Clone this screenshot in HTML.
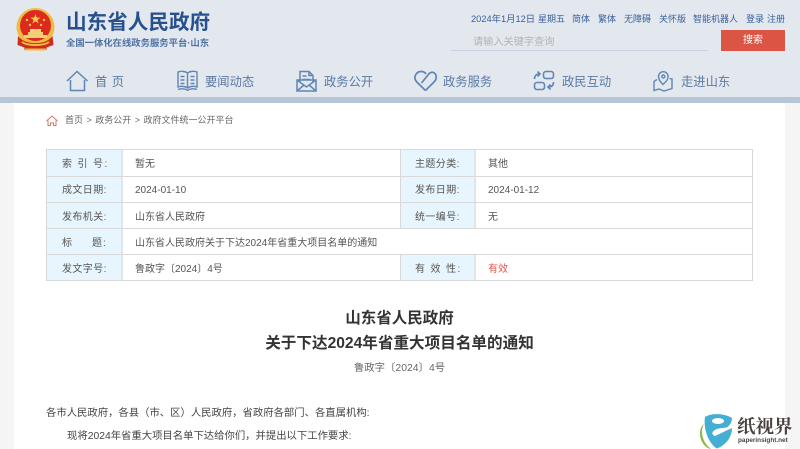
<!DOCTYPE html>
<html lang="zh"><head><meta charset="utf-8"><style>
html,body{margin:0;padding:0}
body{width:800px;height:449px;position:relative;overflow:hidden;background:#f5f5f5;font-family:"Liberation Sans","Noto Sans CJK SC",sans-serif;font-size:10px;color:#444}
div,span,svg{position:absolute;white-space:nowrap}
.n{color:#5a7aa3;font-size:12.3px;line-height:18px;top:73px}
.t{top:12px;font-size:9px;color:#39609b;line-height:14px}
.b{background:#e7f6fe}
.l{color:#555;line-height:24px}
.l span{position:static;letter-spacing:0}
.v{line-height:24px;color:#555}
.ln{background:#d9d9d9}
.lg{background:#e0e5ea}
</style></head><body>
<div style="left:0;top:0;width:800px;height:97px;background:#e3e7ee"></div>
<div style="left:0;top:97px;width:800px;height:6px;background:#b6c6d8"></div>
<div style="left:14px;top:103px;width:771px;height:346px;background:#fff"></div>

<svg style="left:15px;top:8px" width="42" height="44" viewBox="0 0 42 44">
<circle cx="20.500" cy="19" r="19" fill="#eebc3e"/><circle cx="20.500" cy="17.500" r="15.500" fill="#dc2a1e"/>
<path d="M20.500 6l1.300 3.600h3.700l-3 2.300 1.100 3.600-3.100-2.200-3.100 2.200 1.100-3.600-3-2.300h3.700z" fill="#f4cc48"/>
<circle cx="12" cy="12" r="1.200" fill="#f4cc48"/><circle cx="29" cy="12" r="1.200" fill="#f4cc48"/><circle cx="15" cy="17" r="1.200" fill="#f4cc48"/><circle cx="26" cy="17" r="1.200" fill="#f4cc48"/>
<path d="M9 30v-3h4v-3h2v-3h11v3h2v3h4v3z" fill="#f2cf76"/>
<path d="M3 28c5 6 11 7 17.500 7s12-1 17-7l1 9-7 2.500v2.500h-22v-2.500l-7-2.500z" fill="#d22a1c"/>
<path d="M7 34c5 4 22 4 27 0M10 41.500h21" stroke="#eebc3e" stroke-width="2" fill="none"/>
</svg>

<div style="left:66px;top:11px;font-size:20.600px;line-height:24px;font-weight:bold;color:#27508f;">山东省人民政府</div>
<div style="left:66px;top:37px;font-size:9.330px;line-height:13px;font-weight:bold;color:#4f72a3">全国一体化在线政务服务平台·山东</div>

<div class="t" style="left:471px;font-size:9.300px">2024年1月12日</div>
<div class="t" style="left:538px">星期五</div>
<div class="t" style="left:572px">简体</div>
<div class="t" style="left:598px">繁体</div>
<div class="t" style="left:624px">无障碍</div>
<div class="t" style="left:659px">关怀版</div>
<div class="t" style="left:693px">智能机器人</div>
<div class="t" style="left:746px">登录</div>
<div class="t" style="left:767px">注册</div>

<div style="left:473px;top:35px;font-size:10.200px;color:#b4b4b4;line-height:16px">请输入关键字查询</div>
<div style="left:451px;top:50px;width:257px;height:1px;background:#c8d2e2"></div>
<div style="left:721px;top:30px;width:64px;height:21px;background:#dc5444;color:#fff;text-align:center;line-height:22px">搜索</div>

<svg style="left:66px;top:70px" width="23" height="22" viewBox="0 0 23 22" fill="none" stroke="#5f86b4" stroke-width="1.500"><path d="M1 11L11 1.500 21.500 11"/><path d="M4.500 10v10.500h14V10"/></svg>
<div class="n" style="left:95px;letter-spacing:4.500px">首页</div>

<svg style="left:177px;top:70px" width="21" height="21" viewBox="0 0 21 21" fill="none" stroke="#5f86b4" stroke-width="1.400"><path d="M1 2c3-1 7-1 9.500 1 2.500-2 6.500-2 9.500-1v15c-3-1-7-1-9.500 1-2.500-2-6.500-2-9.500-1z"/><path d="M10.500 3v15M3.500 6.500h4M3.500 10h4M3.500 13.500h4M13.500 6.500h4M13.500 10h4M13.500 13.500h4M1 19.500c3-1 7-1 9.500.8 2.500-1.800 6.500-1.800 9.500-.8"/></svg>
<div class="n" style="left:205px">要闻动态</div>

<svg style="left:296px;top:70px" width="21" height="22" viewBox="0 0 21 22" fill="none" stroke="#5f86b4" stroke-width="1.500"><path d="M1 10v11h19V10z"/><path d="M4 12V1.500h9l4 4V12M13 1.500v4h4M6.500 6h4M6.500 9.500h8"/><path d="M1 10l9.500 7 9.500-7M1 21l7-6M20 21l-7-6"/></svg>
<div class="n" style="left:324px">政务公开</div>

<svg style="left:414px;top:70px" width="23" height="22" viewBox="0 0 23 22" fill="none" stroke="#5f86b4" stroke-width="1.700"><path d="M11.500 20.500L2.800 12C-1.500 7 2.500 1.200 7.500 1.500c2 .1 3.500 1 4.500 2.500"/><path d="M7.500 13L14 5c3-4.500 8-3 8.200 2 .1 2.200-.9 3.800-2.200 5l-8.500 8.500"/></svg>
<div class="n" style="left:443px">政务服务</div>

<svg style="left:533px;top:70px" width="22" height="21" viewBox="0 0 22 21" fill="none" stroke="#5f86b4" stroke-width="1.600"><rect x="10.500" y="1.500" width="10" height="7" rx="2.500"/><rect x="1.500" y="12.500" width="10" height="7" rx="2.500"/><path d="M1.500 9c0-3 1.500-5 5-5M4.500 1.500L7 4 4.500 6.500M20.500 12c0 3-1.500 5-5 5M17.500 14.500L15 17l2.500 2.500"/></svg>
<div class="n" style="left:562px">政民互动</div>

<svg style="left:653px;top:70px" width="20" height="22" viewBox="0 0 20 22" fill="none" stroke="#5f86b4" stroke-width="1.400"><path d="M10 14.500C7 11.500 5.500 9.500 5.500 6.500a4.800 4.800 0 0 1 9.600 0c0 3-2 5-5.100 8z"/><circle cx="10.300" cy="6.500" r="1.500"/><path d="M4 9.500L1 11.500v9l5-1.500 5 2 8-2.500V9l-2.500-.5"/></svg>
<div class="n" style="left:681px">走进山东</div>

<svg style="left:46px;top:115px" width="12" height="11" viewBox="0 0 12 11" fill="none" stroke="#d9776a" stroke-width="1"><path d="M.5 6L6 1l5.500 5M2 5.500v5h2.500V8h3v2.500H10v-5"/></svg>
<div style="left:65px;top:112px;line-height:16px;color:#666;font-size:9px;word-spacing:1px">首页 &gt; 政务公开 &gt; 政府文件统一公开平台</div>

<div style="left:46px;top:149px;width:707px;height:132px;box-sizing:border-box;border:1px solid #d9d9d9;background:#fff"></div>
<div class="b" style="left:47px;top:150px;width:74px;height:130px"></div>
<div class="b" style="left:401px;top:150px;width:74px;height:78px"></div>
<div class="b" style="left:401px;top:255px;width:74px;height:25px"></div>
<div class="lg" style="left:121px;top:150px;width:2px;height:130px"></div>
<div class="ln" style="left:400px;top:150px;width:1px;height:78px"></div>
<div class="lg" style="left:474px;top:150px;width:2px;height:78px"></div>
<div class="ln" style="left:400px;top:255px;width:1px;height:25px"></div>
<div class="lg" style="left:474px;top:255px;width:2px;height:25px"></div>
<div class="ln" style="left:46px;top:176px;width:707px;height:1px"></div>
<div class="ln" style="left:46px;top:202px;width:707px;height:1px"></div>
<div class="ln" style="left:46px;top:228px;width:707px;height:1px"></div>
<div class="ln" style="left:46px;top:254px;width:707px;height:1px"></div>

<div class="l" style="left:62px;top:153px;letter-spacing:5.500px">索引号<span style="margin-left:-4px">:</span></div>
<div class="l" style="left:62px;top:179px;letter-spacing:.4px">成文日期:</div>
<div class="l" style="left:62px;top:206px;letter-spacing:.4px">发布机关:</div>
<div class="l" style="left:62px;top:232px;letter-spacing:20px">标题<span style="margin-left:-19px">:</span></div>
<div class="l" style="left:62px;top:258px;letter-spacing:.4px">发文字号:</div>
<div class="l" style="left:415px;top:153px;letter-spacing:.4px">主题分类:</div>
<div class="l" style="left:415px;top:179px;letter-spacing:.4px">发布日期:</div>
<div class="l" style="left:415px;top:206px;letter-spacing:.4px">统一编号:</div>
<div class="l" style="left:415px;top:258px;letter-spacing:5.500px">有效性<span style="margin-left:-4px">:</span></div>

<div class="v" style="left:135px;top:153px">暂无</div>
<div class="v" style="left:135px;top:179px">2024-01-10</div>
<div class="v" style="left:135px;top:206px">山东省人民政府</div>
<div class="v" style="left:135px;top:232px">山东省人民政府关于下达2024年省重大项目名单的通知</div>
<div class="v" style="left:135px;top:258px">鲁政字〔2024〕4号</div>
<div class="v" style="left:488px;top:153px">其他</div>
<div class="v" style="left:488px;top:179px">2024-01-12</div>
<div class="v" style="left:488px;top:206px">无</div>
<div class="v" style="left:488px;top:258px;color:#e4574a">有效</div>

<div style="left:0;width:799px;text-align:center;top:309px;font-size:15.500px;line-height:20px;font-weight:bold;color:#333">山东省人民政府</div>
<div style="left:0;width:799px;text-align:center;top:334px;font-size:15.600px;line-height:20px;font-weight:bold;color:#333">关于下达2024年省重大项目名单的通知</div>
<div style="left:0;width:799px;text-align:center;top:361px;font-size:10.400px;line-height:15px;color:#666">鲁政字〔2024〕4号</div>

<div style="left:46px;top:406px;font-size:10.350px;line-height:16px;color:#444">各市人民政府，各县（市、区）人民政府，省政府各部门、各直属机构:</div>
<div style="left:67px;top:429px;font-size:10.350px;line-height:16px;color:#444">现将2024年省重大项目名单下达给你们，并提出以下工作要求:</div>

<svg style="left:700px;top:414px" width="34" height="35" viewBox="0 0 34 35">
<path d="M4 10C0 17 2 28 11 35 5 34 0 27 0 20c0-4 1-8 4-10z" fill="#8cb94a"/>
<path d="M5 3C11-1 24-1 32 4c0 4-2 7-5 9.500-5 .5-11 .5-14 4-1.500 2 0 4 2 4.500l17-8c0 9-6 17-15 20.500C9 30 3 15 5 3z" fill="#45aed3"/>
<ellipse cx="18" cy="7" rx="6" ry="3" fill="#fff"/>
</svg>
<div style="left:737px;top:414px;font-family:'Noto Serif CJK SC',serif;font-size:18.500px;line-height:24px;color:#4a4040;font-weight:bold">纸视界</div>
<div style="left:738px;top:436px;font-size:6.400px;line-height:10px;font-weight:bold;color:#444">paperinsight.net</div>
</body></html>
